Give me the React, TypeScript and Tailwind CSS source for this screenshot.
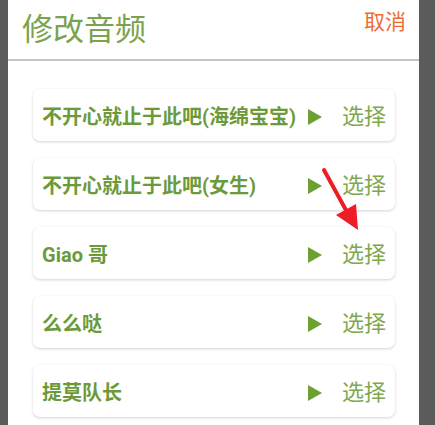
import React from 'react'

const items = ['不开心就止于此吧(海绵宝宝)', '不开心就止于此吧(女生)', 'Giao 哥', '么么哒', '提莫队长']

const font = { fontFamily: '"Roboto", "Noto Sans CJK SC", sans-serif' }

export default function App() {
  return (
    <div className="w-[435px] h-[425px] bg-[#5b5b5b] overflow-hidden relative" style={font}>
      <div className="ml-[8px] w-[411px] h-full bg-white flex flex-col">
        <div className="h-[61px] flex items-center justify-between pl-[14px] pr-[13px] border-b-[2px] border-[#c4c4c4]">
          <span className="text-[31px] leading-none text-[#7ba24c] mt-[0px]">修改音频</span>
          <span className="text-[21px] leading-none text-[#ea6d37] self-start mt-[12px]">取消</span>
        </div>
        <div className="flex flex-col gap-[17px] pt-[28px] pl-[25px] pr-[24px]">
          {items.map((name) => (
            <div
              key={name}
              className="h-[52px] rounded-[7px] bg-white shadow-[0_1px_3px_rgba(0,0,0,0.18)] flex items-center pl-[9px] pr-[9px] pt-[3px]"
            >
              <span className="flex-1 text-[20px] font-bold text-[#6c9a3a] whitespace-nowrap">{name}</span>
              <svg width="14" height="16" viewBox="0 0 14 16" className="mr-[20px]">
                <polygon points="0,0 14,8 0,16" fill="#6aa130" />
              </svg>
              <span className="text-[22px] leading-none text-[#7fa84e]">选择</span>
            </div>
          ))}
        </div>
      </div>
      <svg className="absolute left-0 top-0" width="435" height="425" viewBox="0 0 435 425">
        <line x1="324" y1="170" x2="347" y2="212" stroke="#ee1c25" strokeWidth="4" strokeLinecap="round" />
        <polygon points="336,215 356,204 358,230" fill="#ee1c25" />
      </svg>
    </div>
  )
}
